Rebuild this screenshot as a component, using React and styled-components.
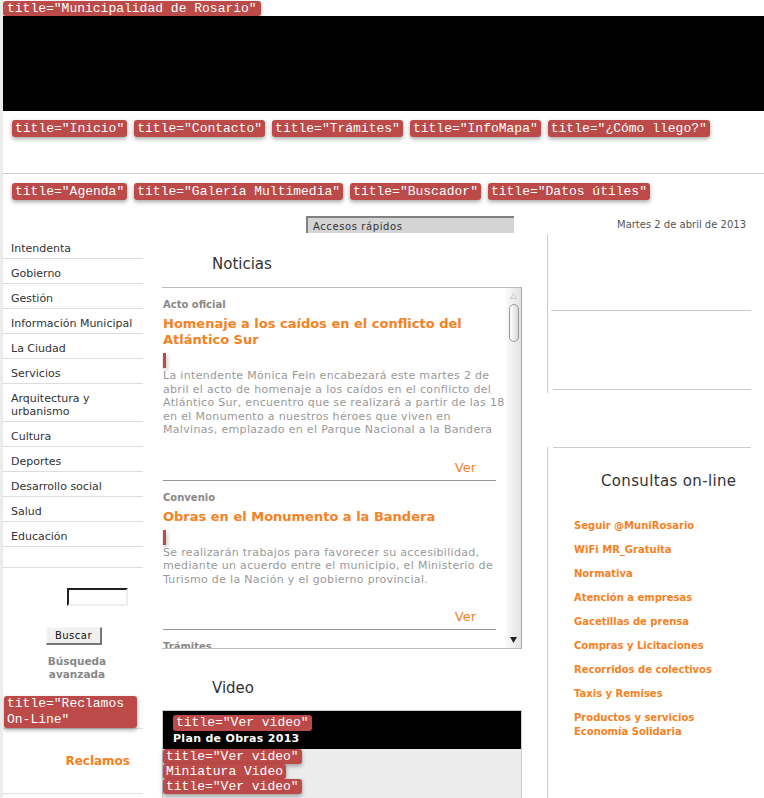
import React from 'react'
import styled, { createGlobalStyle } from 'styled-components'

const GlobalStyle = createGlobalStyle`
  body {
    margin: 0;
    background: #ececec;
    font-family: "DejaVu Sans", Verdana, sans-serif;
  }
  a { text-decoration: none; }
`

const orange = '#f5821f'

const Page = styled.div`
  margin-left: 3px;
  background: #fff;
  height: 798px;
  overflow: hidden;
`

const Badge = styled.span`
  display: ${p => (p.$block ? 'block' : 'inline-block')};
  background: #bb4a48;
  color: #fff;
  font: 13px/${p => p.$lh || 15}px "Liberation Mono", monospace;
  padding: ${p => p.$pad || '0 3px'};
  border-radius: 3px;
  box-shadow: 0 2px 4px rgba(0, 0, 0, 0.35);
  white-space: ${p => (p.$wrap ? 'normal' : 'nowrap')};
`

const Header = styled.header`
  display: flex;
  flex-direction: column;
  align-items: flex-start;
  padding-top: 1px;
`

const Banner = styled.div`
  align-self: stretch;
  height: 95px;
  background: #000;
`

const NavRow = styled.nav`
  display: flex;
  align-items: flex-start;
  gap: 7px;
  box-sizing: border-box;
  height: ${p => p.$h}px;
  padding: 9px 0 0 9px;
  border-bottom: ${p => (p.$divider ? '1px solid #cfcfcf' : '0')};
`

const Main = styled.div`
  display: flex;
  align-items: flex-start;
`

const LeftCol = styled.aside`
  width: 140px;
  padding-top: 24px;
`

const MenuItem = styled.a`
  display: block;
  padding: 8px 4px 3px 8px;
  font-size: 11px;
  line-height: 13px;
  color: #333;
  border-bottom: 1px solid #ddd;
`

const Spacer = styled.div`
  height: 20px;
  border-bottom: 1px solid #ddd;
`

const Search = styled.form`
  padding-top: 20px;
  display: flex;
  flex-direction: column;
  align-items: flex-start;
`

const SearchInput = styled.input`
  box-sizing: border-box;
  width: 61px;
  height: 18px;
  margin: 0 0 0 64px;
  border: 2px inset #eee;
  border-top-color: #777;
  border-left-color: #777;
  background: #fff;
`

const SearchButton = styled.button`
  box-sizing: border-box;
  width: 56px;
  height: 18px;
  margin: 21px 0 0 43px;
  padding: 0;
  font: 10px "DejaVu Sans", sans-serif;
  letter-spacing: 0.5px;
  color: #111;
  background: #f0f0f0;
  border: 1px solid #f8f8f8;
  border-right: 2px solid #777;
  border-bottom: 2px solid #777;
`

const Advanced = styled.a`
  display: block;
  width: 84px;
  margin: 10px 0 0 32px;
  text-align: center;
  font: bold 10.5px/13px "DejaVu Sans", sans-serif;
  color: #888;
`

const ReclamosBadge = styled.div`
  margin-top: 15px;
  border-bottom: 1px solid #ddd;
  padding-left: 1px;
  padding-right: 6px;
`

const ReclamosLink = styled.a`
  display: block;
  padding: 24px 13px 24px 0;
  text-align: right;
  font: bold 12px/16px "DejaVu Sans", sans-serif;
  color: ${orange};
  border-bottom: 1px solid #ddd;
`

const CenterCol = styled.section`
  width: 360px;
  margin-left: 19px;
`

const QuickAccess = styled.div`
  margin: 6px 0 0 144px;
  width: 208px;
  box-sizing: border-box;
  height: 17px;
  padding: 2px 0 0 5px;
  background: #d4d4d4;
  border-top: 2px solid #808080;
  border-left: 2px solid #808080;
  font-size: 10px;
  line-height: 13px;
  letter-spacing: 0.6px;
  color: #333;
`

const Heading = styled.h2`
  margin: ${p => p.$m};
  padding-left: ${p => p.$pl || 0}px;
  font: 15px/18px "DejaVu Sans", sans-serif;
  letter-spacing: ${p => p.$ls || 0}px;
  color: #333;
`

const NewsBox = styled.div`
  display: flex;
  height: 360px;
  border-top: 1px solid #bbb;
  border-bottom: 1px solid #bbb;
  border-right: 1px solid #aaa;
`

const NewsList = styled.div`
  flex: 1;
  overflow: hidden;
  padding: 0 10px 0 1px;
`

const NewsItem = styled.article`
  padding: 10px 0 4px;
  border-bottom: 1px solid #999;
`

const Category = styled.div`
  font: bold 10px/13px "DejaVu Sans", sans-serif;
  color: #888;
`

const NewsTitle = styled.h3`
  margin: 5px 0 0;
  font: bold 13px/16px "DejaVu Sans", sans-serif;
  color: ${orange};
`

const Marker = styled.span`
  display: block;
  width: 3px;
  height: 15px;
  margin-top: 5px;
  background: #bb4a48;
  box-shadow: 1px 2px 4px rgba(0, 0, 0, 0.3);
`

const Summary = styled.p`
  margin: 1px -10px 0 0;
  font-size: 11px;
  line-height: 13.5px;
  letter-spacing: 0.32px;
  color: #999;
`

const More = styled.a`
  display: block;
  margin-top: 23px;
  padding-right: 20px;
  text-align: right;
  font-size: 13px;
  line-height: 16px;
  color: ${orange};
`

const ScrollTrack = styled.div`
  width: 15px;
  display: flex;
  flex-direction: column;
  align-items: center;
  background: linear-gradient(to right, #fafafa, #e2e2e2);
`

const ScrollArrow = styled.div`
  height: 16px;
  display: flex;
  align-items: center;
  justify-content: center;
`

const Thumb = styled.div`
  width: 10px;
  height: 38px;
  box-sizing: border-box;
  border: 1px solid #999;
  border-radius: 6px;
  background: linear-gradient(to right, #fff, #d8d8d8);
`

const Fill = styled.div`
  flex: 1;
`

const VideoBox = styled.div`
  border: 1px solid #ccc;
  background: #ececec;
  height: 120px;
`

const VideoHead = styled.div`
  display: flex;
  flex-direction: column;
  align-items: flex-start;
  background: #000;
  padding: 4px 0 4px 10px;
`

const VideoTitle = styled.div`
  margin-top: 1px;
  font: bold 11px/13px "DejaVu Sans", sans-serif;
  letter-spacing: 0.3px;
  color: #fff;
`

const VideoThumbs = styled.div`
  display: flex;
  flex-direction: column;
  align-items: flex-start;
`

const RightCol = styled.aside`
  width: 204px;
  margin-left: 25px;
`

const DateLine = styled.div`
  height: 24px;
  box-sizing: border-box;
  padding: 9px 5px 0 0;
  text-align: right;
  font-size: 10px;
  line-height: 12px;
  color: #555;
`

const SideBlock = styled.div`
  border-left: 1px solid #ccc;
  margin-top: ${p => p.$mt || 0}px;
  padding-bottom: ${p => p.$pb || 0}px;
  min-height: ${p => p.$minh || 0}px;
`

const SideCell = styled.div`
  height: ${p => p.$h}px;
  margin-left: ${p => p.$ml}px;
  border-bottom: 1px solid #ccc;
`

const SideRule = styled.div`
  margin-left: 5px;
  border-top: 1px solid #ccc;
`

const Links = styled.nav`
  display: flex;
  flex-direction: column;
  gap: 10px;
  margin-top: 29px;
  padding-left: 26px;
`

const SideLink = styled.a`
  font: bold 10px/14px "DejaVu Sans", sans-serif;
  color: ${orange};
`

const menu = [
  'Intendenta',
  'Gobierno',
  'Gestión',
  'Información Municipal',
  'La Ciudad',
  'Servicios',
  'Arquitectura y urbanismo',
  'Cultura',
  'Deportes',
  'Desarrollo social',
  'Salud',
  'Educación',
]

const news = [
  {
    cat: 'Acto oficial',
    title: 'Homenaje a los caídos en el conflicto del Atlántico Sur',
    text: 'La intendente Mónica Fein encabezará este martes 2 de abril el acto de homenaje a los caídos en el conflicto del Atlántico Sur, encuentro que se realizará a partir de las 18 en el Monumento a nuestros héroes que viven en Malvinas, emplazado en el Parque Nacional a la Bandera',
  },
  {
    cat: 'Convenio',
    title: 'Obras en el Monumento a la Bandera',
    text: 'Se realizarán trabajos para favorecer su accesibilidad, mediante un acuerdo entre el municipio, el Ministerio de Turismo de la Nación y el gobierno provincial.',
  },
  {
    cat: 'Trámites',
    title: 'Nuevos horarios de atención',
    text: 'Los centros municipales de distrito amplían su horario de atención al público.',
  },
]

const links = [
  'Seguir @MuniRosario',
  'WiFi MR_Gratuita',
  'Normativa',
  'Atención a empresas',
  'Gacetillas de prensa',
  'Compras y Licitaciones',
  'Recorridos de colectivos',
  'Taxis y Remises',
  'Productos y servicios Economía Solidaria',
]

const navTop = ['Inicio', 'Contacto', 'Trámites', 'InfoMapa', '¿Cómo llego?']
const navBottom = ['Agenda', 'Galería Multimedia', 'Buscador', 'Datos útiles']

function Arrow({ up }) {
  return (
    <svg width="7" height="6" viewBox="0 0 7 6">
      {up ? (
        <path d="M3.5 0.5 L6.5 5.5 L0.5 5.5 Z" fill="none" stroke="#ccc" />
      ) : (
        <path d="M0 0 L7 0 L3.5 6 Z" fill="#222" />
      )}
    </svg>
  )
}

export default function App() {
  return (
    <Page>
      <GlobalStyle />
      <Header>
        <Badge $pad="0 4px">title="Municipalidad de Rosario"</Badge>
        <Banner />
      </Header>

      <NavRow $h={63} $divider>
        {navTop.map(n => (
          <Badge key={n} $pad="1px 3px">title="{n}"</Badge>
        ))}
      </NavRow>
      <NavRow $h={36}>
        {navBottom.map(n => (
          <Badge key={n} $pad="1px 3px">title="{n}"</Badge>
        ))}
      </NavRow>

      <Main>
        <LeftCol>
          {menu.map(m => (
            <MenuItem key={m} href="#">{m}</MenuItem>
          ))}
          <Spacer />
          <Search onSubmit={e => e.preventDefault()}>
            <SearchInput type="text" />
            <SearchButton type="submit">Buscar</SearchButton>
          </Search>
          <Advanced href="#">Búsqueda avanzada</Advanced>
          <ReclamosBadge>
            <Badge $block $wrap $lh={16}>
              title="Reclamos On-Line"
            </Badge>
          </ReclamosBadge>
          <ReclamosLink href="#">Reclamos</ReclamosLink>
        </LeftCol>

        <CenterCol>
          <QuickAccess>Accesos rápidos</QuickAccess>
          <Heading $m="22px 0 14px" $pl={50}>Noticias</Heading>
          <NewsBox>
            <NewsList>
              {news.map(n => (
                <NewsItem key={n.cat}>
                  <Category>{n.cat}</Category>
                  <NewsTitle>{n.title}</NewsTitle>
                  <Marker />
                  <Summary>{n.text}</Summary>
                  <More href="#">Ver</More>
                </NewsItem>
              ))}
            </NewsList>
            <ScrollTrack>
              <ScrollArrow><Arrow up /></ScrollArrow>
              <Thumb />
              <Fill />
              <ScrollArrow><Arrow /></ScrollArrow>
            </ScrollTrack>
          </NewsBox>
          <Heading $m="30px 0 13px" $pl={50}>Video</Heading>
          <VideoBox>
            <VideoHead>
              <Badge $lh={16}>title="Ver video"</Badge>
              <VideoTitle>Plan de Obras 2013</VideoTitle>
            </VideoHead>
            <VideoThumbs>
              <Badge>title="Ver video"</Badge>
              <Badge>Miniatura Video</Badge>
              <Badge>title="Ver video"</Badge>
            </VideoThumbs>
          </VideoBox>
        </CenterCol>

        <RightCol>
          <DateLine>Martes 2 de abril de 2013</DateLine>
          <SideBlock $pb={3}>
            <SideCell $h={76} $ml={3} />
            <SideCell $h={78} $ml={5} />
          </SideBlock>
          <SideBlock $mt={54} $minh={400}>
            <SideRule />
            <Heading $m="24px 0 0" $pl={53} $ls={0.35}>Consultas on-line</Heading>
            <Links>
              {links.map(l => (
                <SideLink key={l} href="#">{l}</SideLink>
              ))}
            </Links>
          </SideBlock>
        </RightCol>
      </Main>
    </Page>
  )
}
